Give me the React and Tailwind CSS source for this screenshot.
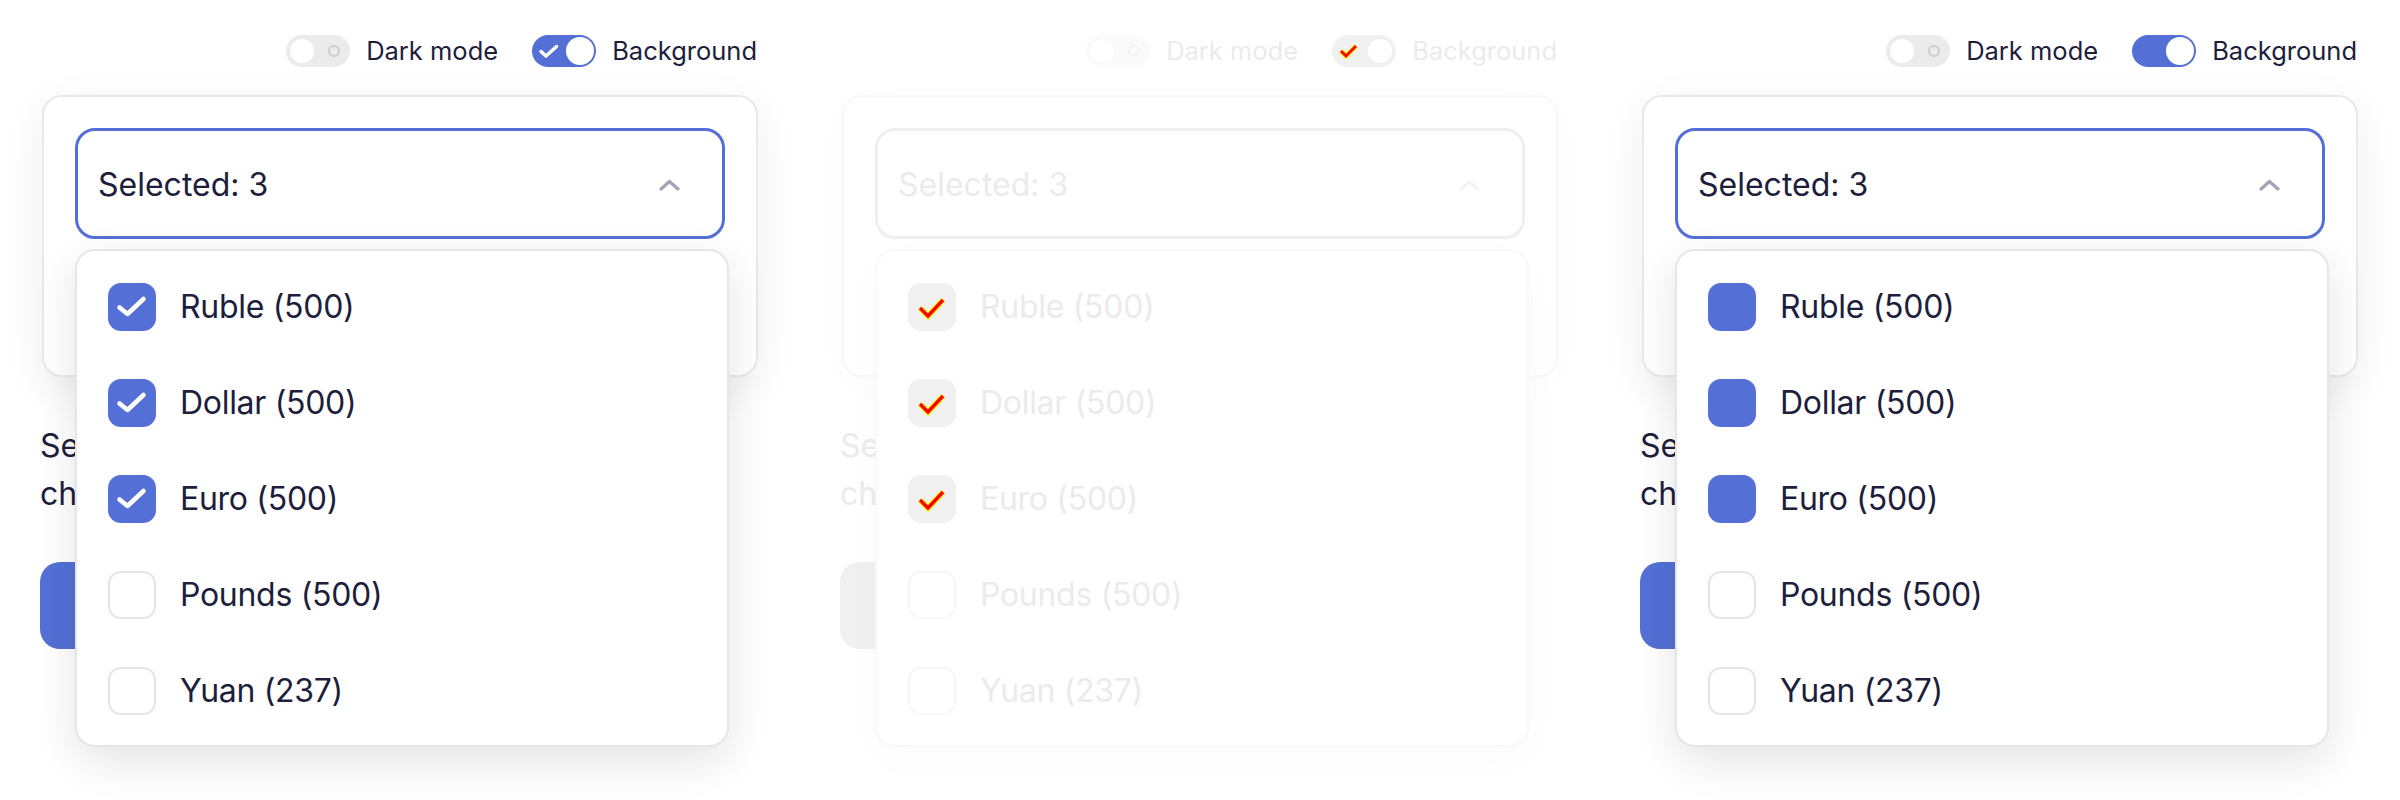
import React from "react";

const items = [
    { label: "Ruble (500)", checked: true },
    { label: "Dollar (500)", checked: true },
    { label: "Euro (500)", checked: true },
    { label: "Pounds (500)", checked: false },
    { label: "Yuan (237)", checked: false },
];

// variant: "check" = normal, "ghost" = washed out with red marks, "solid" = no check glyphs
function CheckMark({ variant }) {
    if (variant === "ghost") {
        return (
            <svg width="48" height="48" viewBox="0 0 48 48" fill="none">
                <path d="M12 25 L20 33 L35 17" stroke="#ffff00" strokeWidth="6" />
                <path d="M12 25 L20 33 L35 17" stroke="#ff0000" strokeWidth="3.5" />
            </svg>
        );
    }
    if (variant === "solid") return null;
    return (
        <svg width="48" height="48" viewBox="0 0 48 48" fill="none">
            <path d="M11.5 24.5 L19.5 31 L35.5 16" stroke="white" strokeWidth="4.5" strokeLinecap="round" strokeLinejoin="round" />
        </svg>
    );
}

function Checkbox({ checked, variant }) {
    const ghost = variant === "ghost";
    if (checked) {
        return (
            <div className={`w-[48px] h-[48px] rounded-[13px] flex items-center justify-center shrink-0 ${ghost ? "bg-[#f0f0f0]" : "bg-[#5470d6]"}`}>
                <CheckMark variant={variant} />
            </div>
        );
    }
    return (
        <div className={`w-[48px] h-[48px] rounded-[13px] border-2 bg-white shrink-0 ${ghost ? "border-[#f6f6f6]" : "border-[#e4e4e4]"}`} />
    );
}

function DarkToggle({ variant }) {
    const ghost = variant === "ghost";
    return (
        <div className={`relative w-[64px] h-[32px] rounded-full ${ghost ? "bg-[#fafafa]" : "bg-[#ebebeb]"}`}>
            <div className="absolute left-[4px] top-[4px] w-[24px] h-[24px] rounded-full bg-white" />
            <div className={`absolute right-[10px] top-[10px] w-[12px] h-[12px] rounded-full border-2 ${ghost ? "border-[#f3f3f3]" : "border-[#cdcdcd]"}`} />
        </div>
    );
}

function BgToggle({ variant }) {
    const ghost = variant === "ghost";
    return (
        <div className={`relative w-[64px] h-[32px] rounded-full ${ghost ? "bg-[#f0f0f0]" : "bg-[#5470d6]"}`}>
            {variant === "check" && (
                <svg className="absolute left-[6px] top-[9px]" width="22" height="15" viewBox="0 0 22 15" fill="none">
                    <path d="M3 7.5 L8 12 L18.5 2.5" stroke="white" strokeWidth="3.5" strokeLinecap="round" strokeLinejoin="round" />
                </svg>
            )}
            {ghost && (
                <svg className="absolute left-[6px] top-[8px]" width="22" height="16" viewBox="0 0 22 16" fill="none">
                    <path d="M3 8 L8 13 L18 3" stroke="#ffff00" strokeWidth="5" />
                    <path d="M3 8 L8 13 L18 3" stroke="#ff0000" strokeWidth="3" />
                </svg>
            )}
            <div className={`absolute right-[2px] top-[2px] w-[28px] h-[28px] rounded-full bg-white ${ghost ? "border-2 border-[#f0f0f0]" : ""}`} />
        </div>
    );
}

function Panel({ variant }) {
    const ghost = variant === "ghost";
    const text = ghost ? "text-[#ebebeb]" : "text-[#1c1e3c]";
    const blue = ghost ? "bg-[#f0f0f0]" : "bg-[#5470d6]";

    return (
        <div className="relative w-[800px] h-[800px] shrink-0 px-[40px] pt-[35px]">
            <div className={`flex justify-end items-center gap-[34px] pr-[3px] h-[32px] text-[25.5px] ${text}`}>
                <div className="flex items-center gap-[16px]">
                    <DarkToggle variant={variant} />
                    <span>Dark mode</span>
                </div>
                <div className="flex items-center gap-[16px]">
                    <BgToggle variant={variant} />
                    <span>Background</span>
                </div>
            </div>

            <div className={`mt-[28px] mx-[2px] h-[282px] rounded-[20px] border-2 bg-white p-[31px] ${ghost ? "border-[#f8f8f8] shadow-[0_10px_50px_rgba(0,0,0,0.015)]" : "border-[#e9e9e9] shadow-[0_12px_44px_rgba(0,0,0,0.07)]"}`}>
                <div className={`h-[111px] rounded-[20px] border-[3px] flex items-center justify-between pl-[20px] pr-[42px] pt-[2px] ${ghost ? "border-[#efefef]" : "border-[#5470d6]"}`}>
                    <span className={`text-[32px] ${text}`}>Selected: 3</span>
                    <svg width="21" height="12" viewBox="0 0 21 12" fill="none">
                        <path d="M2 10 L10.5 2.5 L19 10" stroke={ghost ? "#f3f3f3" : "#a4a4b6"} strokeWidth="3.2" strokeLinecap="round" strokeLinejoin="round" />
                    </svg>
                </div>
            </div>

            {/* sits under the open list, only its start shows */}
            <p className={`mt-[45px] text-[32px] leading-[48px] ${text}`}>
                Select currencies to
                <br />
                check the exchange rate
            </p>

            <button className={`mt-[44px] h-[87px] w-[320px] rounded-[20px] ${blue}`} />

            {/* open dropdown */}
            <div className={`absolute left-[75px] top-[249px] w-[654px] h-[498px] rounded-[20px] border-2 bg-white pt-[8px] pb-[6px] ${ghost ? "border-[#f8f8f8] shadow-[0_12px_50px_rgba(0,0,0,0.02)]" : "border-[#e6e6e6] shadow-[0_14px_44px_rgba(0,0,0,0.11)]"}`}>
                {items.map((item) => (
                    <div key={item.label} className="h-[96px] flex items-center gap-[24px] pl-[31px]">
                        <Checkbox checked={item.checked} variant={variant} />
                        <span className={`text-[32px] tracking-[-0.3px] ${text}`}>{item.label}</span>
                    </div>
                ))}
            </div>
        </div>
    );
}

export default function App() {
    return (
        <div className="flex w-[2400px] h-[800px] bg-white overflow-hidden" style={{ fontFamily: "Inter, 'Noto Sans', sans-serif" }}>
            <Panel variant="check" />
            <Panel variant="ghost" />
            <Panel variant="solid" />
        </div>
    );
}
